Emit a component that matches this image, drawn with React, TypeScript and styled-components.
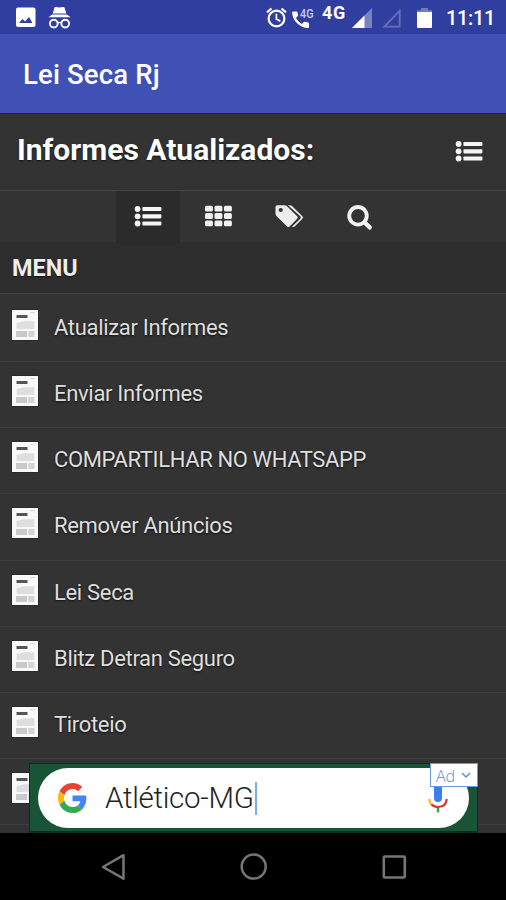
import React from 'react';
import styled, { createGlobalStyle } from 'styled-components';

const GlobalStyle = createGlobalStyle`
  * { box-sizing: border-box; }
  body { margin: 0; background: #000; font-family: Roboto, "Noto Sans", sans-serif; }
  svg { display: block; flex: none; overflow: visible; }
`;

const Screen = styled.div`
  position: relative;
  width: 506px;
  height: 900px;
  overflow: hidden;
  display: flex;
  flex-direction: column;
  background: #333;
  white-space: nowrap;
`;

const StatusBar = styled.header`
  height: 34px;
  flex: none;
  display: flex;
  align-items: flex-start;
  padding-left: 16px;
  background: #303f9f;
  color: #fff;
`;

const StatusIcon = styled.span<{ $top: number; $left: number }>`
  margin: ${p => p.$top}px 0 0 ${p => p.$left}px;
`;

const Network = styled.span`
  width: 24px;
  margin: 4px 0 0 8px;
  font: 700 18px/18px Roboto, sans-serif;
  letter-spacing: 0.6px;
`;

const Clock = styled.time`
  margin: 7px 0 0 14px;
  font: 500 20px/23px Roboto, sans-serif;
  letter-spacing: -0.35px;
`;

const AppBar = styled.div`
  height: 79px;
  flex: none;
  padding: 25px 0 0 23px;
  background: #3f51b5;
  color: #fff;
  font-size: 27.5px;
  font-weight: 500;
  letter-spacing: 0.15px;
  line-height: 32px;
`;

const TitleBar = styled.div`
  height: 78px;
  flex: none;
  display: flex;
  align-items: flex-start;
  justify-content: space-between;
  padding: 19px 23px 0 17px;
  border-top: 1px solid #24241f;
  border-bottom: 1px solid #434343;
  color: #fff;
`;

const Title = styled.h1`
  margin: 0;
  font-size: 30px;
  font-weight: 700;
  line-height: 34px;
  text-shadow: 0 1px 2px #111;
`;

const TitleAction = styled.div`
  margin-top: 7px;
`;

const Tabs = styled.nav`
  height: 51px;
  flex: none;
  display: flex;
  padding-left: 116px;
  background: #333;
`;

const Tab = styled.div<{ $active?: boolean; $width: number; $top?: number }>`
  position: relative;
  width: ${p => p.$width}px;
  height: ${p => (p.$active ? 54 : 51)}px;
  display: flex;
  justify-content: center;
  padding-top: ${p => p.$top ?? 13}px;
  background: ${p => (p.$active ? '#2b2b2b' : 'transparent')};
`;

const MenuHeading = styled.h2`
  height: 52px;
  flex: none;
  margin: 0;
  padding: 11px 0 0 12px;
  border-bottom: 1px solid #414141;
  background: #2d2d2d;
  color: #eee;
  font-size: 23.4px;
  font-weight: 700;
  line-height: 30px;
  text-shadow: 0 1px 1px #111;
`;

const Menu = styled.ul`
  height: 539px;
  flex: none;
  margin: 0;
  padding: 2px 0 0;
  list-style: none;
  overflow: hidden;
`;

const MenuRow = styled.li`
  height: 66.15px;
  display: flex;
  gap: 16px;
  padding: 13px 0 0 12px;
  border-bottom: 1px solid #3d3d3d;
  color: #dedede;
  font-size: 22px;
  line-height: 37px;
  text-shadow: 0 1px 2px #111;
`;

const MenuLabel = styled.span<{ $tracking?: number }>`
  letter-spacing: ${p => p.$tracking ?? -0.32}px;
`;

const NavBar = styled.footer`
  height: 67px;
  flex: none;
  display: flex;
  justify-content: space-between;
  align-items: flex-start;
  padding: 20px 99px 0 101px;
  background: #000;
`;

const AdBanner = styled.aside`
  position: absolute;
  left: 29px;
  top: 763px;
  width: 449px;
  height: 70px;
  padding: 5px 8px 5px 8px;
  border: 1px solid #092f1d;
  border-bottom-width: 2px;
  background: #1a5437;
`;

const SearchPill = styled.div`
  height: 60px;
  display: flex;
  align-items: center;
  padding: 0 21px 0 20px;
  margin-top: -1px;
  border-radius: 31px;
  background: #fff;
`;

const Query = styled.span`
  margin-left: 18px;
  color: #222;
  font-size: 29.5px;
  font-weight: 300;
  letter-spacing: -0.27px;
  line-height: 34px;
`;

const Caret = styled.span`
  width: 2px;
  height: 33px;
  margin: 0 auto 0 1.4px;
  background: #7aabf5;
`;

const AdBadge = styled.div`
  position: absolute;
  right: -1px;
  top: -1px;
  width: 48px;
  height: 24px;
  display: flex;
  align-items: center;
  justify-content: space-between;
  padding: 1px 6px 0 5px;
  border: 1px solid #6598e9;
  background: #fff;
  color: #5b8edb;
  font: 300 16px/18px "Open Sans", sans-serif;
`;

const ListIcon = () => (
  <svg width="28" height="23" viewBox="0 0 28 23" fill="#f4f4f4">
    {[4, 11.3, 18.5].map(y => (
      <React.Fragment key={y}>
        <circle cx="3.6" cy={y} r="2.9" />
        <rect x="8.4" y={y - 2.1} width="19" height="4.2" rx="0.8" />
      </React.Fragment>
    ))}
  </svg>
);

const GridIcon = () => (
  <svg width="27" height="23" viewBox="0 0 27 23" fill="#f0f0f0">
    {[1.7, 9.1, 16.5].map(y =>
      [0, 9.5, 19].map(x => <rect key={`${x}-${y}`} x={x} y={y} width="7.9" height="5.8" rx="1.5" />),
    )}
  </svg>
);

const TagsIcon = () => (
  <svg width="29" height="24" viewBox="0 0 29 24">
    <path d="M13 1.3h2.2q1 0 1.8.8l10.4 10.2q1.2 1.3 0 2.5l-7.8 7.8q-1.3 1-2.5 0l8.2-7.9q1.1-1.2 0-2.4Z" fill="#ececec" />
    <path fillRule="evenodd" d="M2.2 1.2h7.5q1.2 0 2.1.9l10.4 10.2q1.2 1.3 0 2.5l-7.6 7.7q-1.2 1.2-2.5 0L1.7 12.2Q.5 11.2.5 9.5V3q0-1.8 1.7-1.8Zm3.5 2.7a2.1 2.1 0 1 0 .1 4.2 2.1 2.1 0 0 0-.1-4.2Z" fill="#ececec" />
  </svg>
);

const SearchIcon = () => (
  <svg width="26" height="26" viewBox="0 0 26 26" fill="none" stroke="#f2f2f2">
    <circle cx="11" cy="11.8" r="8.8" strokeWidth="3.8" />
    <path d="m17.7 18.5 5 4.9" strokeWidth="4.4" strokeLinecap="round" />
  </svg>
);

const NewsIcon = () => (
  <svg width="26" height="32" viewBox="0 0 26 32">
    <rect x="-.5" y=".5" width="27" height="31" fill="#222" />
    <rect width="26" height="30" y="1" fill="#f8f8f8" />
    <rect x="4.5" y="6" width="11" height="3" fill="#555" />
    <rect x="18" y="3" width="5" height="1.2" fill="#ddd" />
    <path d="M4.5 14 12 12.2h10.3V20H4.5Z" fill="#dedede" />
    <rect x="4" y="22" width="11" height="6" fill="#c9c9c9" />
    <rect x="16.3" y="22" width="6.2" height="6" fill="#d4d4d4" />
  </svg>
);

const PictureIcon = () => (
  <svg width="20" height="20" viewBox="0 0 20 20">
    <rect y=".5" width="19.5" height="19.5" rx="2" fill="#fff" />
    <path d="m3 16 3.5-4 2.5 2.6 4-4.6 3.5 6Z" fill="#303f9f" />
  </svg>
);

const IncognitoIcon = () => (
  <svg width="23" height="23" viewBox="0 0 23 23">
    <path d="M4.8 7.4 6.3 2Q6.7.7 8.2 1.1q3.2.9 6.5 0 1.5-.4 2 .9l1.6 5.4Z" fill="#fff" />
    <path d="M.5 11.2 4.2 8.5h14.6l3.8 2.7Z" fill="#fff" />
    <g fill="none" stroke="#fff" strokeWidth="1.9">
      <circle cx="5.8" cy="17.6" r="3.9" />
      <circle cx="17.2" cy="17.6" r="3.9" />
      <path d="M9.5 17q2-1.3 4 0" strokeWidth="1.4" />
    </g>
  </svg>
);

const AlarmIcon = () => (
  <svg width="21" height="21" viewBox="0 0 21 21" fill="none" stroke="#fff">
    <circle cx="10.5" cy="11.5" r="7.9" strokeWidth="2.2" />
    <path d="M1 5.3 5.5 1.5M20 5.3 15.5 1.5" strokeWidth="2.2" />
    <path d="M10.4 6.7v5.2l4 2.4" strokeWidth="1.7" />
  </svg>
);

const CallIcon = () => (
  <svg width="22" height="20" viewBox="0 0 22 20">
    <path
      d="M1.2 2.4h3.4q.8 0 .9.8l.5 3q.1.6-.4 1.1L3.9 9.1q2 4 5.9 5.9l1.8-1.8q.5-.5 1.2-.4l3.4.7q.8.1.8.9V18q0 1-1 1Q10 19 5.1 14.2T.2 3.4q0-1 1-1Z"
      fill="#fff"
    />
    <text x="8" y="9" fontFamily="Roboto, sans-serif" fontSize="13" fontWeight="500" fill="#c4cbee" textLength="13.5" lengthAdjust="spacingAndGlyphs">
      4G
    </text>
  </svg>
);

const SignalIcon = () => (
  <svg width="20" height="20" viewBox="0 0 20 20">
    <path d="M20 0v20H0Z" fill="#7883c2" />
    <path d="M12.5 7.5V20H0Z" fill="#fff" />
  </svg>
);

const EmptySignalIcon = () => (
  <svg width="19" height="20" viewBox="0 0 19 20">
    <path d="M17.7 2.8v15.9H2.4Z" fill="none" stroke="#6471b8" strokeWidth="1.8" />
  </svg>
);

const BatteryIcon = () => (
  <svg width="15" height="20" viewBox="0 0 15 20">
    <path d="M0 4V2.2h4V0h7v2.2h4V4Z" fill="#727dbb" />
    <path d="M0 4h15v15q0 1-1 1H1q-1 0-1-1Z" fill="#fff" />
  </svg>
);

const GoogleIcon = () => (
  <svg width="29" height="30" viewBox="2 2 44 44" preserveAspectRatio="none">
    <g transform="translate(2 2) scale(.917)">
      <path fill="#ea4335" d="M24 9.5c3.54 0 6.71 1.22 9.21 3.6l6.85-6.85C35.9 2.38 30.47 0 24 0 14.62 0 6.51 5.38 2.56 13.22l7.98 6.19C12.43 13.72 17.74 9.5 24 9.5Z" />
      <path fill="#4285f4" d="M46.98 24.55c0-1.57-.15-3.09-.38-4.55H24v9.02h12.94c-.58 2.96-2.26 5.48-4.78 7.18l7.73 6c4.51-4.18 7.09-10.36 7.09-17.65Z" />
      <path fill="#fbbc05" d="M10.53 28.59A14.5 14.5 0 0 1 9.77 24c0-1.6.27-3.14.76-4.59l-7.98-6.19A23.9 23.9 0 0 0 0 24c0 3.88.92 7.54 2.56 10.78l7.97-6.19Z" />
      <path fill="#34a853" d="M24 48c6.48 0 11.93-2.13 15.89-5.81l-7.73-6c-2.15 1.45-4.92 2.3-8.16 2.3-6.26 0-11.57-4.22-13.47-9.91l-7.98 6.19C6.51 42.62 14.62 48 24 48Z" />
    </g>
  </svg>
);

const MicIcon = () => (
  <svg width="20" height="32" viewBox="0 0 20 32" fill="none">
    <path d="M10 4v12" stroke="#3c7df2" strokeWidth="8" strokeLinecap="round" />
    <path d="M1.3 17q0 3.2 2.1 5.3" stroke="#fbbc05" strokeWidth="2.2" />
    <path d="M3.4 22.2Q6 25 10 25q8.3-.3 8.7-8" stroke="#df2f31" strokeWidth="2.2" />
    <path d="M10 26v4.5" stroke="#34a853" strokeWidth="2.5" />
  </svg>
);

const ChevronIcon = () => (
  <svg width="10" height="7" viewBox="0 0 10 7" fill="none" stroke="#5b8edb" strokeWidth="1.5">
    <path d="m1 1 4 4 4-4" />
  </svg>
);

const BackIcon = () => (
  <svg width="25" height="28" viewBox="0 0 25 28" fill="none" stroke="#757575" strokeWidth="2.5" strokeLinejoin="round">
    <path d="M22.5 2.2v23.5L2 14Z" />
  </svg>
);

const HomeIcon = () => (
  <svg width="28" height="28" viewBox="0 0 28 28" fill="none" stroke="#757575" strokeWidth="2.5">
    <circle cx="13.7" cy="13.6" r="12" />
  </svg>
);

const RecentsIcon = () => (
  <svg width="25" height="28" viewBox="0 0 25 28" fill="none" stroke="#757575" strokeWidth="2.6">
    <rect x="1.8" y="3.5" width="21" height="21" rx="1" />
  </svg>
);

const items: { label: string; tracking?: number }[] = [
  { label: 'Atualizar Informes' },
  { label: 'Enviar Informes' },
  { label: 'COMPARTILHAR NO WHATSAPP', tracking: -0.38 },
  { label: 'Remover Anúncios' },
  { label: 'Lei Seca' },
  { label: 'Blitz Detran Seguro' },
  { label: 'Tiroteio' },
  { label: '' },
  { label: '' },
];

export default function App() {
  return (
    <>
      <GlobalStyle />
      <Screen>
        <StatusBar>
          <StatusIcon $top={7} $left={0}><PictureIcon /></StatusIcon>
          <StatusIcon $top={6} $left={12}><IncognitoIcon /></StatusIcon>
          <StatusIcon $top={7} $left={195}><AlarmIcon /></StatusIcon>
          <StatusIcon $top={9} $left={5}><CallIcon /></StatusIcon>
          <Network>4G</Network>
          <StatusIcon $top={8} $left={6}><SignalIcon /></StatusIcon>
          <StatusIcon $top={8} $left={10}><EmptySignalIcon /></StatusIcon>
          <StatusIcon $top={8} $left={16}><BatteryIcon /></StatusIcon>
          <Clock>11:11</Clock>
        </StatusBar>
        <AppBar>Lei Seca Rj</AppBar>
        <TitleBar>
          <Title>Informes Atualizados:</Title>
          <TitleAction><ListIcon /></TitleAction>
        </TitleBar>
        <Tabs>
          <Tab $width={64} $top={14} $active><ListIcon /></Tab>
          <Tab $width={77}><GridIcon /></Tab>
          <Tab $width={64}><TagsIcon /></Tab>
          <Tab $width={78}><SearchIcon /></Tab>
        </Tabs>
        <MenuHeading>MENU</MenuHeading>
        <Menu>
          {items.map((item, i) => (
            <MenuRow key={i}>
              <NewsIcon />
              <MenuLabel $tracking={item.tracking}>{item.label}</MenuLabel>
            </MenuRow>
          ))}
        </Menu>
        <NavBar>
          <BackIcon />
          <HomeIcon />
          <RecentsIcon />
        </NavBar>
        <AdBanner>
          <SearchPill>
            <GoogleIcon />
            <Query>Atlético-MG</Query>
            <Caret />
            <MicIcon />
          </SearchPill>
          <AdBadge>
            Ad
            <ChevronIcon />
          </AdBadge>
        </AdBanner>
      </Screen>
    </>
  );
}
